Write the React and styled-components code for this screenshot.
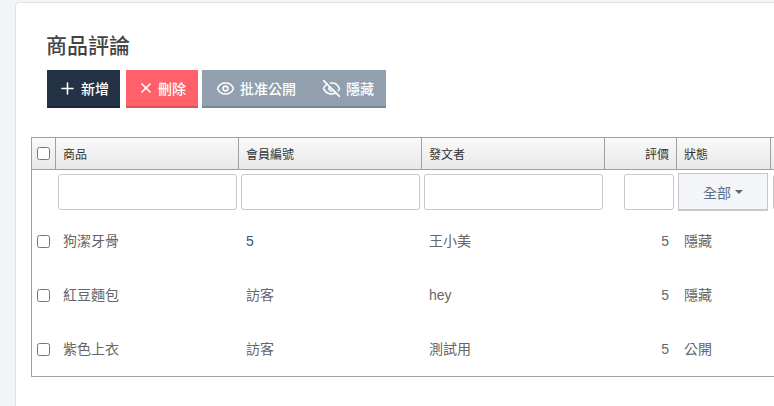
import styled, { createGlobalStyle } from 'styled-components';
import { Plus, X, Eye, EyeOff } from 'lucide-react';

const GlobalStyle = createGlobalStyle`
  html, body {
    margin: 0;
    height: 406px;
    overflow: hidden;
    background: #f3f4f6;
    font-family: "Liberation Sans", "Noto Sans CJK TC", sans-serif;
  }
`;

const columns = '23px 183px 183px 183px 72px 94px 21px';

const Page = styled.div`
  width: 774px;
  height: 406px;
  padding: 2px 0 0 15px;
  box-sizing: border-box;
  overflow: hidden;
`;

const Card = styled.main`
  width: 800px;
  height: 420px;
  box-sizing: border-box;
  background: #fff;
  border: 1px solid #e0e0e0;
  border-radius: 4px;
  padding: 29px 0 0 15px;
`;

const Title = styled.h1`
  margin: 0 0 0 15px;
  font-size: 21px;
  line-height: 28px;
  font-weight: 500;
  color: #444;
  height: 38px;
`;

const Toolbar = styled.div`
  display: flex;
  margin-left: 16px;
  height: 38px;
`;

const Button = styled.button`
  display: flex;
  align-items: center;
  justify-content: center;
  gap: ${(p) => p.$space}px;
  width: ${(p) => p.$width}px;
  height: 38px;
  margin-right: ${(p) => p.$gap || 0}px;
  padding: 0;
  border: 0;
  border-bottom: 2px solid ${(p) => p.$edge};
  background: ${(p) => p.$bg};
  color: #fff;
  font: 500 14px "Liberation Sans", "Noto Sans CJK TC", sans-serif;
  svg {
    flex: none;
  }
`;

const Table = styled.div`
  width: 760px;
  margin-top: 29px;
  border: solid #a0a0a0;
  border-width: 1px 0 1px 1px;
`;

const HeadRow = styled.div`
  display: grid;
  grid-template-columns: ${columns};
  height: 31px;
  border-bottom: 1px solid #a0a0a0;
  background: linear-gradient(#fafafa, #e8e8e8);
`;

const HeadCell = styled.div`
  display: flex;
  align-items: center;
  justify-content: ${(p) => (p.$right ? 'flex-end' : 'flex-start')};
  padding: 0 7px;
  box-sizing: border-box;
  border-left: 1px solid #a0a0a0;
  font-size: 12px;
  font-weight: 400;
  color: #333;
`;

const CheckCell = styled.div`
  display: flex;
  align-items: center;
  justify-content: center;
`;

const Check = styled.span`
  display: block;
  width: 13px;
  height: 13px;
  box-sizing: border-box;
  border: 1px solid #767676;
  border-radius: 2.5px;
  background: #fff;
`;

const FilterRow = styled.div`
  display: grid;
  grid-template-columns: ${columns};
  height: 44px;
  align-items: start;
`;

const FilterInput = styled.div`
  box-sizing: border-box;
  height: 36px;
  margin: 4px ${(p) => (p.$narrow ? 2 : 1)}px 0 ${(p) => (p.$narrow ? 20 : 3)}px;
  background: #fff;
  border: 1px solid #c8c8c8;
  border-radius: 3px;
`;

const StatusSelect = styled.div`
  box-sizing: border-box;
  display: flex;
  align-items: center;
  justify-content: center;
  gap: 4px;
  height: 38px;
  margin: 3px 2px 0 2px;
  background: #f3f5f8;
  border: 1px solid #c6c9cc;
  border-bottom: 2px solid #c6c9cc;
  font-size: 14px;
  color: #5c7189;
`;

const Caret = styled.i`
  width: 0;
  height: 0;
  border: 4px solid transparent;
  border-top-color: #5c6670;
  border-bottom: 0;
`;

const Row = styled.div`
  display: grid;
  grid-template-columns: ${columns};
  height: 54px;
  align-items: center;
`;

const LastSpacer = styled.div`
  height: 1px;
`;

const Cell = styled.div`
  padding: 0 7px 0 8px;
  font-size: 14px;
  line-height: 20px;
  color: ${(p) => (p.$link ? '#34557a' : '#666')};
  text-align: ${(p) => (p.$right ? 'right' : 'left')};
`;

const reviews = [
  { product: '狗潔牙骨', member: '5', author: '王小美', rating: 5, status: '隱藏', link: true },
  { product: '紅豆麵包', member: '訪客', author: 'hey', rating: 5, status: '隱藏' },
  { product: '紫色上衣', member: '訪客', author: '測試用', rating: 5, status: '公開' },
];

const App = () => (
  <Page>
    <GlobalStyle />
    <Card>
      <Title>商品評論</Title>
      <Toolbar>
        <Button $width={73} $gap={6} $space={4} $bg="#233245" $edge="#1c2837">
          <Plus size={19} />
          新增
        </Button>
        <Button $width={72} $gap={4} $space={4} $bg="#ff6069" $edge="#d9525a">
          <X size={16} strokeWidth={2.5} />
          刪除
        </Button>
        <Button $width={108} $space={5} $bg="#919fae" $edge="#7c8894">
          <Eye size={19} />
          批准公開
        </Button>
        <Button $width={76} $space={5} $bg="#919fae" $edge="#7c8894">
          <EyeOff size={19} />
          隱藏
        </Button>
      </Toolbar>
      <Table>
        <HeadRow>
          <CheckCell><Check /></CheckCell>
          <HeadCell>商品</HeadCell>
          <HeadCell>會員編號</HeadCell>
          <HeadCell>發文者</HeadCell>
          <HeadCell $right>評價</HeadCell>
          <HeadCell>狀態</HeadCell>
          <HeadCell />
        </HeadRow>
        <FilterRow>
          <div />
          <FilterInput />
          <FilterInput />
          <FilterInput />
          <FilterInput $narrow />
          <StatusSelect>全部<Caret /></StatusSelect>
          <FilterInput />
        </FilterRow>
        {reviews.map((r) => (
          <Row key={r.product}>
            <CheckCell><Check /></CheckCell>
            <Cell>{r.product}</Cell>
            <Cell $link={r.link}>{r.member}</Cell>
            <Cell>{r.author}</Cell>
            <Cell $right>{r.rating}</Cell>
            <Cell>{r.status}</Cell>
            <LastSpacer />
          </Row>
        ))}
      </Table>
    </Card>
  </Page>
);

export default App;
